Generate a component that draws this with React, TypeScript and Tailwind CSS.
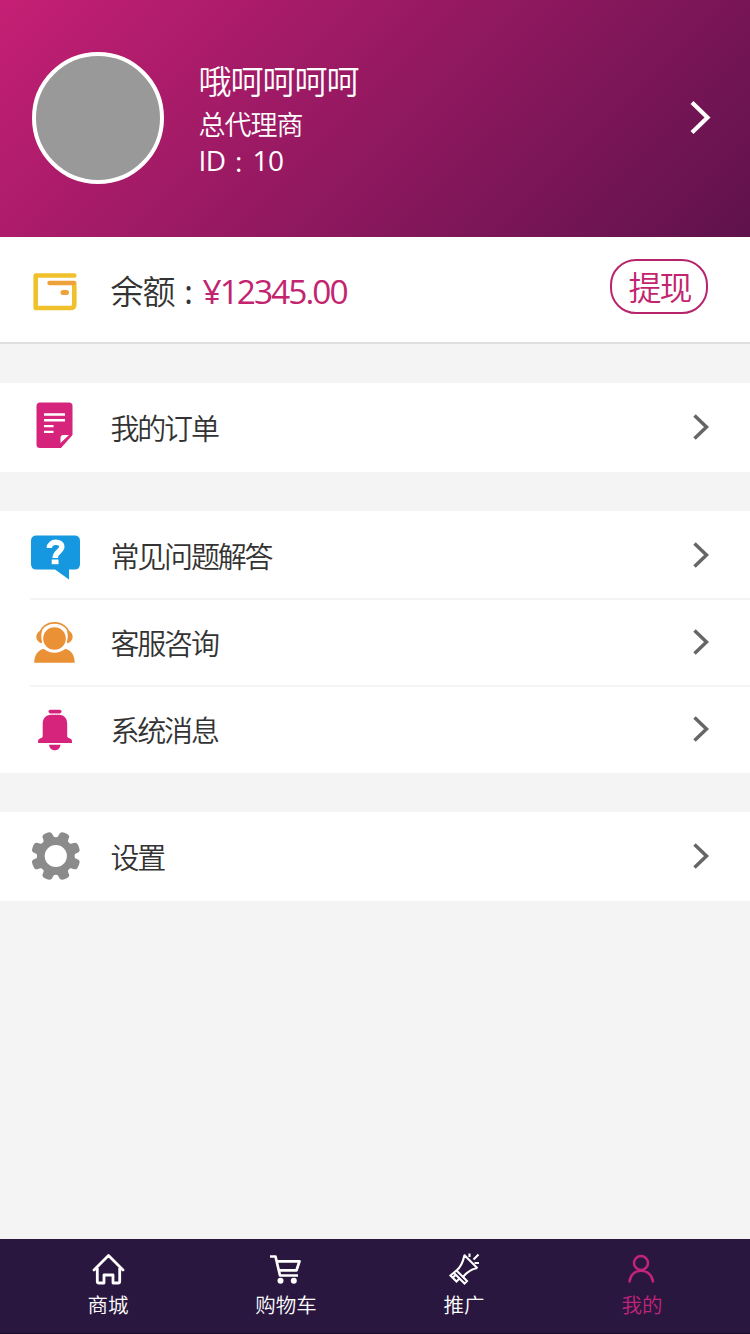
import React from "react";

function Chevron({ large = false }: { large?: boolean }) {
  return large ? (
    <svg width="22" height="36" viewBox="690 100 22 36" fill="none" stroke="#fff" strokeWidth="4.200">
      <path d="M692 102.500L707.500 117.500L692 132.500" />
    </svg>
  ) : (
    <svg width="18" height="28" viewBox="692 414 18 28" fill="none" stroke="#666" strokeWidth="3.500">
      <path d="M694.500 415.500L706.500 427L694.500 438.500" />
    </svg>
  );
}

function WalletIcon() {
  return (
    <svg width="50" height="44" viewBox="30 268 50 44" fill="none" strokeLinecap="round" strokeLinejoin="round">
      <path d="M74.300 275.500H35.700V308H70.500Q74.300 308 74.300 304.500V283" stroke="#f1c12c" strokeWidth="4.600" />
      <path d="M49.500 283H73.500" stroke="#eea13a" strokeWidth="4.400" />
      <path d="M63 292.500H66.500" stroke="#eea13a" strokeWidth="5" />
    </svg>
  );
}

function OrderIcon() {
  return (
    <svg width="50" height="54" viewBox="30 401 50 54">
      <path d="M40 402.500H69Q72.500 402.500 72.500 406V435L61 448H40Q36.500 448 36.500 444.500V406Q36.500 402.500 40 402.500Z" fill="#d6247c" />
      <path d="M44 414.500H65M44 420.300H65M44 426.100H53.500M44 431.900H53.500" stroke="#fff" strokeWidth="2.400" />
      <path d="M60.500 443V438Q60.500 435 63.500 435H69Z" fill="#fff" />
    </svg>
  );
}

function QuestionIcon() {
  return (
    <svg width="50" height="50" viewBox="30 530.500 50 50">
      <path d="M36.500 535H74.500Q80 535 80 540.500V563.500Q80 569 74.500 569H69V579L55 569H36.500Q31 569 31 563.500V540.500Q31 535 36.500 535Z" fill="#1598df" />
      <path d="M49.300 547.500C49.500 540 61.800 540 61.800 546.300C61.800 551 55.200 550.800 55.200 557.500" fill="none" stroke="#fff" strokeWidth="5.400" />
      <rect x="51.700" y="559" width="6.800" height="4.700" fill="#fff" />
    </svg>
  );
}

function ServiceIcon() {
  return (
    <svg width="50" height="50" viewBox="30 618 50 50" fill="#ea9136">
      <circle cx="54.500" cy="638.500" r="11.300" />
      <path d="M39.500 636C41 618.500 68 618.500 69.500 636" fill="none" stroke="#ea9136" strokeWidth="1.700" />
      <path d="M40.500 630.500C35 633 34.800 640.500 40.500 643C42 643.600 42.300 642 41.800 640.500C41 637.500 41 634.500 41.800 632C42 631 41.500 630.200 40.500 630.500ZM68.500 630.500C74 633 74.200 640.500 68.500 643C67 643.600 66.700 642 67.200 640.500C68 637.500 68 634.500 67.200 632C67 631 67.500 630.200 68.500 630.500Z" />
      <path d="M34.200 662.800C34.500 654.500 38 650.500 43.500 648.800C50.500 654 58.500 654 65.500 648.800C71 650.500 74.500 654.500 74.800 662.800Z" />
    </svg>
  );
}

function BellIcon() {
  return (
    <svg width="50" height="50" viewBox="30 705 50 50" fill="#d6247c">
      <rect x="48.500" y="709.800" width="13" height="3.600" rx="1.800" />
      <path d="M42.700 724C42.700 717 47 714.800 52 714.800H58C63 714.800 67.200 717 67.200 724V736.500Q67.500 738 70 738.500Q72 739.200 72 741V743H38V741Q38 739.200 40 738.500Q42.500 738 42.700 736.500Z" />
      <path d="M49 744.700H60.500C60 748.500 57.500 750.200 54.800 750.200C52 750.200 49.500 748.500 49 744.700Z" />
    </svg>
  );
}

function GearIcon() {
  const teeth = [22.5, 67.5, 112.5, 157.5, 202.5, 247.5, 292.5, 337.5];
  return (
    <svg width="50" height="50" viewBox="-25.800 -24 50 50" fill="#8b8b8b">
      {teeth.map((angle) => (
        <path key={angle} transform={`rotate(${angle})`} d="M-7.500 -16.500Q-5 -18 -5.200 -20.500Q-5.600 -23.800 -3 -24.500Q0 -25.200 3 -24.500Q5.600 -23.800 5.200 -20.500Q5 -18 7.500 -16.500V-13H-7.500Z" />
      ))}
      <circle r="14.900" fill="none" stroke="#8b8b8b" strokeWidth="7.600" />
    </svg>
  );
}

function HomeIcon() {
  return (
    <svg width="36" height="34" viewBox="90 1252 36 34" fill="none" stroke="#fff" strokeWidth="2.800" strokeLinejoin="round" strokeLinecap="round">
      <path d="M94 1270L108.500 1255.500L123 1270M97.300 1268V1281.500Q97.300 1283 99 1283H104V1275H113V1283H118Q119.700 1283 119.700 1281.500V1268" />
    </svg>
  );
}

function CartIcon() {
  return (
    <svg width="36" height="34" viewBox="268 1252 36 34" fill="none" stroke="#fff" strokeWidth="2.700" strokeLinejoin="round">
      <path d="M270 1256.500H275.500L280 1275.500H298M277 1261.300H299.500L296.500 1270.300H279" />
      <circle cx="280.500" cy="1280.800" r="3" fill="#fff" stroke="none" />
      <circle cx="293.800" cy="1280.800" r="3" fill="#fff" stroke="none" />
    </svg>
  );
}

function MegaphoneIcon() {
  return (
    <svg width="36" height="34" viewBox="446 1252 36 34" fill="none" stroke="#fff" strokeWidth="2.100">
      <path d="M464 1254.800L477.500 1268.300M464.500 1255C463 1262 461 1267 456.500 1270.500L463 1277C467 1272 472 1269 477.300 1268M456.500 1270.500L450.500 1275.500L456.500 1281.500L460 1278M454 1273L464.500 1283.500L467 1281L462 1276M453 1277.500L455.500 1275" />
      <path d="M469.500 1253.500V1257M473.500 1259.500L478.500 1254.500M474.500 1263H479" />
    </svg>
  );
}

function UserIcon() {
  return (
    <svg width="36" height="34" viewBox="623.500 1252 36 34" fill="none" stroke="#c2247a" strokeWidth="2.500" strokeLinecap="round">
      <circle cx="640.500" cy="1263" r="7" />
      <path d="M629 1281.500C630.500 1267 650.500 1267 652.500 1281.500" />
    </svg>
  );
}

function MenuRow({ icon, label, className }: { icon: React.ReactNode; label: string; className: string }) {
  return (
    <div className={`flex items-center bg-white pl-[30px] pr-10 ${className}`}>
      {icon}
      <span className="ml-[30.500px] flex-1 pt-[2.500px] text-[29px] leading-10 tracking-[-2.200px] text-[#333]">{label}</span>
      <Chevron />
    </div>
  );
}

function Tab({ icon, label, active = false }: { icon: React.ReactNode; label: string; active?: boolean }) {
  return (
    <div className={`flex w-[178px] flex-col items-center ${active ? "text-[#c2247a]" : "text-white"}`}>
      {icon}
      <span className="mt-[5px] text-[20.500px] leading-7">{label}</span>
    </div>
  );
}

export default function App() {
  return (
    <div className="flex h-[1334px] w-[750px] flex-col overflow-hidden bg-[#f4f4f4] font-['Noto_Sans','Noto_Sans_CJK_SC',sans-serif] font-[350]">
      <header className="flex h-[237px] shrink-0 items-center bg-[linear-gradient(135deg,#c51f74_0%,#5f124c_100%)] pb-0.5 pl-8 pr-[38px] text-white">
        <div className="h-[132px] w-[132px] rounded-full border-4 border-white bg-[#999]" />
        <div className="ml-[34.500px] flex flex-1 flex-col">
          <span className="pt-px text-[33px] leading-[46px] tracking-[-1px]">哦呵呵呵呵</span>
          <span className="pt-px text-[27px] leading-[38px] tracking-[-1px]">总代理商</span>
          <span className="-mt-px flex font-['Open_Sans',sans-serif] text-[28px] font-normal leading-[34px] tracking-[-0.500px]">
            <span className="w-[26px]">ID</span>
            <span className="w-7 pt-px text-center">:</span>
            <span>10</span>
          </span>
        </div>
        <Chevron large />
      </header>

      <section className="flex h-[107px] shrink-0 items-center border-b-2 border-[#e0e0e0] bg-white pl-[30px] pr-[42px]">
        <WalletIcon />
        <div className="ml-[30.500px] flex flex-1 pt-[4px] leading-[46px] text-[#333]">
          <span className="w-16 pt-px text-[33px] tracking-[-1px]">余额</span>
          <span className="w-7 pt-px text-center text-[32px] font-normal">:</span>
          <span className="font-['Open_Sans',sans-serif] text-[33.500px] font-normal tracking-[-2px] text-[#c2246f]">¥12345.00</span>
        </div>
        <button className="mb-[7px] flex h-[55px] w-[98px] items-center justify-center rounded-[26px] border-2 border-[#b8246c] pl-px pt-[3px] text-[33px] tracking-[-2px] text-[#c2246f]">
          提现
        </button>
      </section>

      <MenuRow icon={<OrderIcon />} label="我的订单" className="mt-[39px] h-[89px]" />

      <section className="mt-[39px] bg-white">
        <MenuRow icon={<QuestionIcon />} label="常见问题解答" className="h-[87px] pt-0.5" />
        <div className="ml-[30px] h-0.5 bg-[#f4f4f4]" />
        <MenuRow icon={<ServiceIcon />} label="客服咨询" className="h-[85px]" />
        <div className="ml-[30px] h-0.5 bg-[#f4f4f4]" />
        <MenuRow icon={<BellIcon />} label="系统消息" className="h-[86px]" />
      </section>

      <MenuRow icon={<GearIcon />} label="设置" className="mt-[39px] h-[89px]" />

      <nav className="mt-auto flex h-[95px] shrink-0 border-b border-[#160a26] bg-[#29173f] pl-[19px] pt-[13px]">
        <Tab icon={<HomeIcon />} label="商城" />
        <Tab icon={<CartIcon />} label="购物车" />
        <Tab icon={<MegaphoneIcon />} label="推广" />
        <Tab icon={<UserIcon />} label="我的" active />
      </nav>
    </div>
  );
}
